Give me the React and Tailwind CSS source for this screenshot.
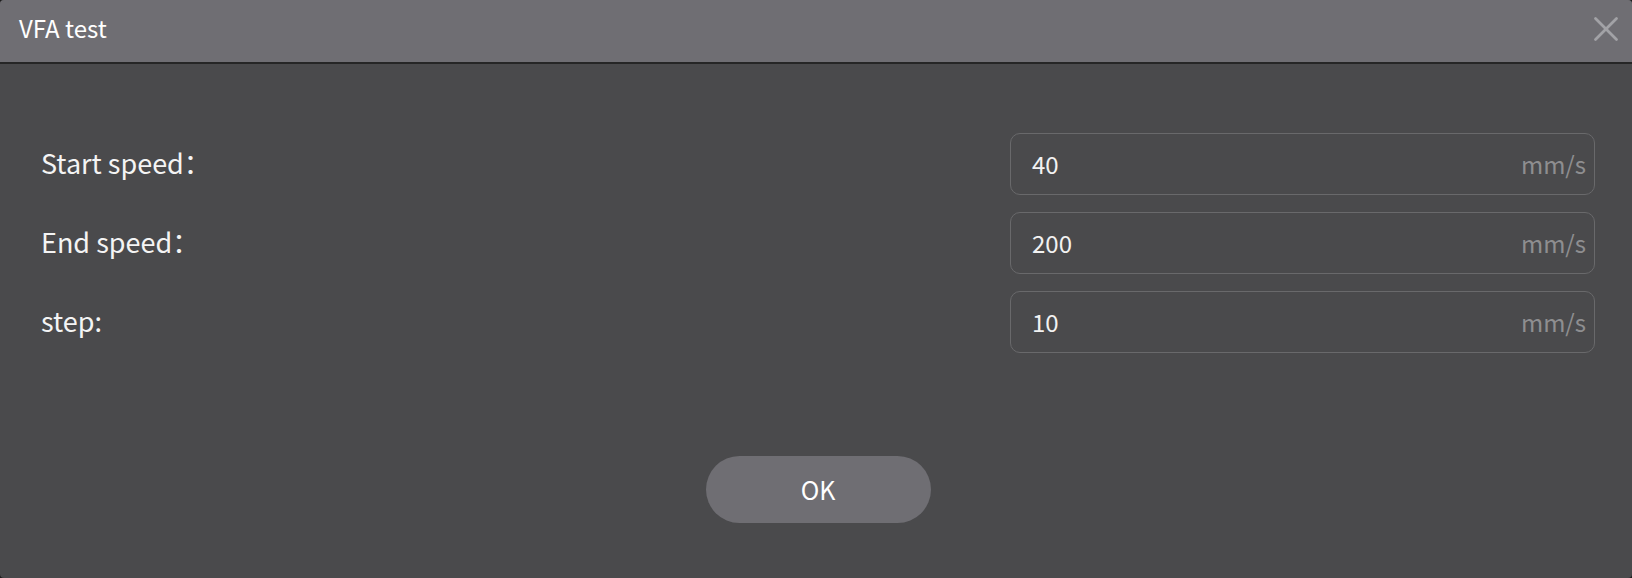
import { X } from 'lucide-react'

const rows = [
  { label: 'Start speed：', value: '40' },
  { label: 'End speed：', value: '200' },
  { label: 'step:', value: '10' },
]

function SpeedField({ label, value }) {
  return (
    <div className="flex items-center justify-between h-[62px]">
      <span className="text-[27px] text-[#f4f4f4] leading-none pb-[4px]">{label}</span>
      <div className="flex items-center justify-between w-[585px] h-[62px] rounded-[10px] border border-[#69696b] pl-[21px] pr-[8px]">
        <span className="text-[24px] text-[#f2f2f2] leading-none pb-[1px]">{value}</span>
        <span className="text-[24px] text-[#8e8e90] leading-none pb-[1px]">mm/s</span>
      </div>
    </div>
  )
}

export default function App() {
  return (
    <div className="h-[578px] w-full bg-[#1c1c1c]" style={{ fontFamily: '"Noto Sans CJK SC", "Noto Sans", sans-serif' }}>
      <div className="flex flex-col h-full rounded-[4px] overflow-hidden bg-[#4a4a4c]">
        {/* Title bar */}
        <div className="flex items-center justify-between h-[64px] shrink-0 bg-[#6f6e73] border-b-2 border-[#262626] pl-[19px] pr-[5px]">
          <span className="text-[24px] text-white leading-none pb-[6px]">VFA test</span>
          <X size={42} strokeWidth={1.6} className="text-[#a2a2a6] mb-[5px]" />
        </div>

        <div className="flex flex-col flex-1 pt-[69px] pl-[41px] pr-[37px]">
          <div className="flex flex-col gap-[17px]">
            {rows.map((r) => (
              <SpeedField key={r.label} label={r.label} value={r.value} />
            ))}
          </div>

          <div className="flex justify-center mt-[103px]">
            <button className="w-[225px] h-[67px] rounded-full bg-[#6f6e73] text-[25px] text-white leading-none">
              OK
            </button>
          </div>
        </div>
      </div>
    </div>
  )
}
